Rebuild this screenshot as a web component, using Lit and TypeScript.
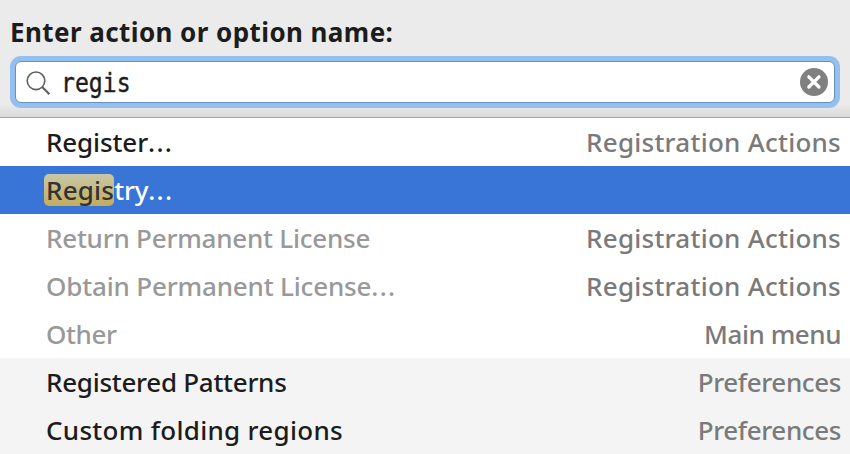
import { LitElement, html, css } from "lit";
import { customElement } from "lit/decorators.js";
import { classMap } from "lit/directives/class-map.js";
import { styleMap } from "lit/directives/style-map.js";

interface Item {
  name: string;
  group: string;
  match?: string;
  dots?: boolean;
  disabled?: boolean;
  selected?: boolean;
  option?: boolean;
  /** Letter spacing of the name and of the group, in px. */
  tracking: [number, number];
}

const ITEMS: Item[] = [
  { name: "Register", dots: true, group: "Registration Actions", tracking: [-0.12, 0.25] },
  { name: "try", match: "Regis", dots: true, group: "", selected: true, tracking: [-0.2, 0] },
  { name: "Return Permanent License", group: "Registration Actions", disabled: true, tracking: [-0.23, 0.25] },
  { name: "Obtain Permanent License", dots: true, group: "Registration Actions", disabled: true, tracking: [-0.17, 0.25] },
  { name: "Other", group: "Main menu", disabled: true, tracking: [-0.4, -0.45] },
  { name: "Registered Patterns", group: "Preferences", option: true, tracking: [-0.28, -0.38] },
  { name: "Custom folding regions", group: "Preferences", option: true, tracking: [0.29, -0.38] },
];

const tracking = (px: number) => styleMap({ letterSpacing: `${px}px` });

@customElement("app-root")
export class AppRoot extends LitElement {
  static styles = css`
    :host {
      display: flex;
      flex-direction: column;
      width: 850px;
      height: 454px;
      overflow: hidden;
      background: #fff;
      color: #1c1c1c;
      font: 500 26px "Noto Sans", "Open Sans", sans-serif;
    }
    .header {
      box-sizing: border-box;
      height: 118px;
      flex: none;
      padding: 14px 10px 0;
      background: linear-gradient(#ebebeb 0, #ebebeb 104px, #dadada 117px);
      border-bottom: 1px solid #a6a6a6;
    }
    .title {
      height: 42px;
      line-height: 37px;
      font-weight: 700;
      letter-spacing: 0.42px;
      white-space: nowrap;
    }
    .field {
      box-sizing: border-box;
      height: 52px;
      padding: 5px;
      border-radius: 11px;
      background: #94c0f1;
    }
    .input {
      box-sizing: border-box;
      height: 42px;
      display: flex;
      align-items: center;
      padding: 0 6px 0 10px;
      border: 1px solid #6a8fbb;
      border-radius: 6px;
      background: #fff;
    }
    .search {
      width: 24px;
      height: 24px;
      margin-top: 2px;
    }
    .query {
      flex: 1;
      margin-left: 10.5px;
      padding-top: 2px;
      font: 26px/40px "DejaVu Sans Mono", monospace;
      -webkit-text-stroke: 0.4px #1c1c1c;
      transform: scaleX(0.89);
      transform-origin: 0 0;
    }
    .clear {
      width: 28px;
      height: 28px;
    }
    .row {
      box-sizing: border-box;
      height: 48px;
      flex: none;
      display: flex;
      justify-content: space-between;
      padding: 0 9px 0 46px;
      line-height: 49px;
      white-space: nowrap;
    }
    .group {
      color: #7a7a7a;
    }
    .disabled .name {
      color: #999;
    }
    .option {
      background: #f4f4f4;
    }
    .selected {
      background: #3875d7;
      color: #fff;
    }
    .dots {
      letter-spacing: 1.3px;
    }
    .match {
      display: inline-block;
      height: 32px;
      margin-left: -2px;
      padding-left: 2px;
      border-radius: 5px;
      line-height: 33px;
      letter-spacing: 0.2px;
      color: #333;
      background: linear-gradient(#c8c7a8, #c3ad5c);
    }
  `;

  render() {
    return html`
      <div class="header">
        <div class="title"><span>Enter action or option name:</span></div>
        <div class="field">
          <div class="input">
            <svg class="search" viewBox="0 0 24 24" fill="none" stroke="#606060">
              <circle cx="10" cy="9.8" r="8.8" stroke-width="1.6" />
              <path d="M16.2 16 23.4 23.2" stroke-width="2.1" />
            </svg>
            <span class="query">regis</span>
            <svg class="clear" viewBox="0 0 28 28">
              <circle cx="14" cy="14" r="14" fill="#808080" />
              <path d="M8.8 8.8 19 19M19 8.8 8.8 19" stroke="#fff" stroke-width="3.2" stroke-linecap="round" />
            </svg>
          </div>
        </div>
      </div>
      ${ITEMS.map(
        (i) => html`<div
          class=${classMap({ row: true, disabled: !!i.disabled, selected: !!i.selected, option: !!i.option })}
        >
          <span class="name" style=${tracking(i.tracking[0])}
            >${i.match ? html`<span class="match">${i.match}</span>` : ""}${i.name}${i.dots
              ? html`<span class="dots">...</span>`
              : ""}</span
          >
          <span class="group" style=${tracking(i.tracking[1])}>${i.group}</span>
        </div>`
      )}
    `;
  }
}
